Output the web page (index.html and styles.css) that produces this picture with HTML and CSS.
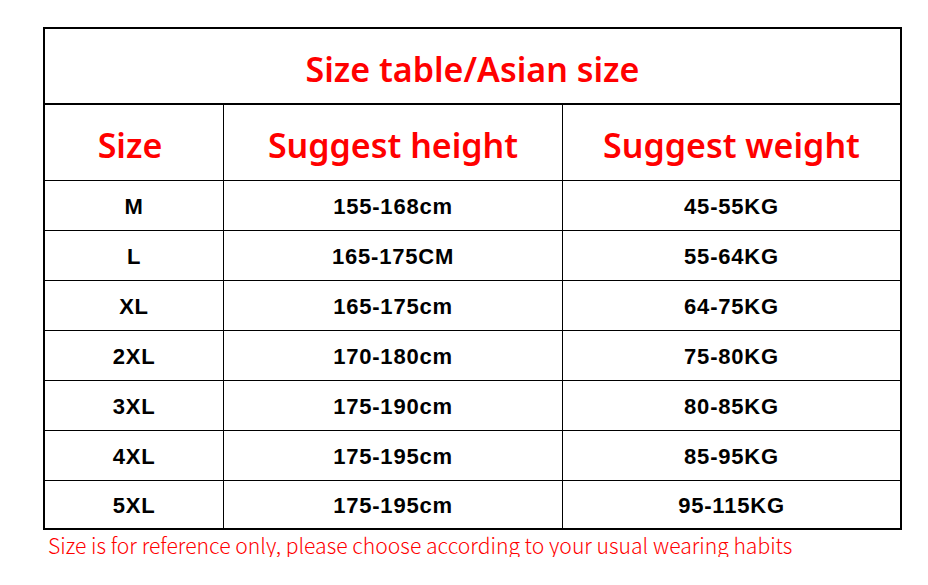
FILE: index.html
```html
<!DOCTYPE html>
<html>
<head>
<meta charset="utf-8">
<link rel="stylesheet" href="styles.css">
</head>
<body>
<div class="sheet">
  <div class="table">
    <div class="title">Size table/Asian size</div>
    <div class="row head">
      <div class="cell first">Size</div>
      <div class="cell">Suggest height</div>
      <div class="cell">Suggest weight</div>
    </div>
    <div class="row"><div class="cell">M</div><div class="cell">155-168cm</div><div class="cell">45-55KG</div></div>
    <div class="row"><div class="cell">L</div><div class="cell">165-175CM</div><div class="cell">55-64KG</div></div>
    <div class="row"><div class="cell">XL</div><div class="cell">165-175cm</div><div class="cell">64-75KG</div></div>
    <div class="row"><div class="cell">2XL</div><div class="cell">170-180cm</div><div class="cell">75-80KG</div></div>
    <div class="row"><div class="cell">3XL</div><div class="cell">175-190cm</div><div class="cell">80-85KG</div></div>
    <div class="row"><div class="cell">4XL</div><div class="cell">175-195cm</div><div class="cell">85-95KG</div></div>
    <div class="row last"><div class="cell">5XL</div><div class="cell">175-195cm</div><div class="cell">95-115KG</div></div>
  </div>
  <p class="note">Size is for reference only, please choose according to your usual wearing habits</p>
</div>
</body>
</html>
```

FILE: styles.css
```css
html, body {
  margin: 0;
  padding: 0;
  background: #fff;
}
.sheet {
  padding: 27px 0 0 43px;
}
.table {
  width: 859px;
  box-sizing: border-box;
  border: 2px solid #000;
}
.title {
  height: 76px;
  border-bottom: 2px solid #000;
  display: flex;
  align-items: center;
  justify-content: center;
  color: #ff0000;
  font-family: "Noto Sans", "Open Sans", sans-serif;
  font-weight: 600;
  font-size: 34px;
  padding-top: 6px;
  box-sizing: border-box;
}
.row {
  display: grid;
  grid-template-columns: 178px 339px 338px;
  height: 50px;
  border-bottom: 1px solid #000;
  box-sizing: border-box;
}
.row.head {
  height: 76px;
}
.row.last {
  height: 47px;
  border-bottom: none;
}
.cell {
  display: flex;
  align-items: center;
  justify-content: center;
  font-family: "Liberation Sans", Arial, sans-serif;
  font-weight: 700;
  font-size: 22px;
  letter-spacing: 0.8px;
  color: #000;
  padding-top: 2px;
  box-sizing: border-box;
}
.cell + .cell {
  border-left: 1px solid #000;
}
.head .cell {
  color: #ff0000;
  font-family: "Noto Sans", "Open Sans", sans-serif;
  font-weight: 600;
  font-size: 34px;
  letter-spacing: 0;
  padding-top: 4px;
}
.head .cell.first {
  padding-right: 8px;
}
.note {
  margin: 3px 0 0 5px;
  color: #ff0000;
  font-family: "Noto Sans CJK SC", "Noto Sans", sans-serif;
  font-weight: 300;
  font-size: 21.15px;
  line-height: 24px;
}
```
